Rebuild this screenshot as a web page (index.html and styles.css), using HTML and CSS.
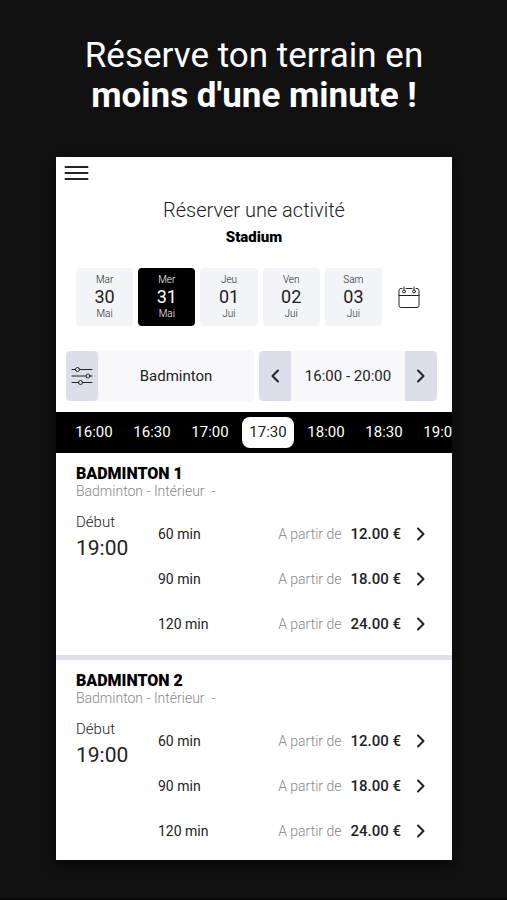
FILE: index.html
```html
<!DOCTYPE html>
<html lang="fr">
<head>
    <meta charset="UTF-8">
    <meta name="viewport" content="width=device-width, initial-scale=1.0">
    <title>Réserver une activité</title>
    <link rel="stylesheet" href="styles.css">
</head>
<body>
    <svg class="sprite" aria-hidden="true">
        <symbol id="next" viewBox="0 0 10 16">
            <path d="M2 2.500 L7.500 8 L2 13.500"/>
        </symbol>
    </svg>
    <h1 class="headline">Réserve ton terrain en <strong>moins d'une minute !</strong></h1>
    <main class="panel">
        <button class="menu" aria-label="Menu">
            <svg viewBox="0 0 24 16"><path d="M1 2H23M1 8H23M1 14H23"/></svg>
        </button>
        <header class="title">
            <h2>Réserver une activité</h2>
            <p>Stadium</p>
        </header>

        <div class="dates">
            <div class="days">
                <button class="day"><span>Mar</span><b>30</b><span>Mai</span></button>
                <button class="day selected"><span>Mer</span><b>31</b><span>Mai</span></button>
                <button class="day"><span>Jeu</span><b>01</b><span>Jui</span></button>
                <button class="day"><span>Ven</span><b>02</b><span>Jui</span></button>
                <button class="day"><span>Sam</span><b>03</b><span>Jui</span></button>
            </div>
            <button class="calendar" aria-label="Calendrier">
                <svg viewBox="0 0 22 22">
                    <path d="M4 2.500H3Q1 2.500 1 4.500V19.500Q1 21.500 3 21.500H19Q21 21.500 21 19.500V4.500Q21 2.500 19 2.500H18M8 2.500H14M1 9.500H21"/>
                    <path d="M6 1V4M16 1V4"/>
                    <circle cx="6" cy="5.500" r="1.500"/>
                    <circle cx="16" cy="5.500" r="1.500"/>
                </svg>
            </button>
        </div>

        <div class="filters">
            <div class="sport">
                <button class="side" aria-label="Filtres">
                    <svg class="sliders" viewBox="0 0 22 20">
                        <path d="M1 3.500H4.500M8.500 3.500H21M1 10H15M19 10H21M1 16.500H7.500M11.500 16.500H21"/>
                        <circle cx="6.500" cy="3.500" r="2"/>
                        <circle cx="17" cy="10" r="2"/>
                        <circle cx="9.500" cy="16.500" r="2"/>
                    </svg>
                </button>
                <button class="value">Badminton</button>
            </div>
            <div class="range">
                <button class="side" aria-label="Plage précédente">
                    <svg class="arrow" viewBox="0 0 10 16"><path d="M8 2.500 L2.500 8 L8 13.500"/></svg>
                </button>
                <span class="value">16:00 - 20:00</span>
                <button class="side" aria-label="Plage suivante">
                    <svg class="arrow"><use href="#next"/></svg>
                </button>
            </div>
        </div>

        <nav class="times">
            <button>16:00</button>
            <button>16:30</button>
            <button>17:00</button>
            <button class="selected">17:30</button>
            <button>18:00</button>
            <button>18:30</button>
            <button>19:00</button>
        </nav>

        <section class="court">
            <h3>BADMINTON 1</h3>
            <p class="kind">Badminton - Intérieur &nbsp;-</p>
            <div class="slots">
                <div class="start"><span>Début</span><b>19:00</b></div>
                <div class="offers">
                    <a class="offer" href="#"><span>60 min</span><small>A partir de</small><b>12.00 €</b><svg class="arrow"><use href="#next"/></svg></a>
                    <a class="offer" href="#"><span>90 min</span><small>A partir de</small><b>18.00 €</b><svg class="arrow"><use href="#next"/></svg></a>
                    <a class="offer" href="#"><span>120 min</span><small>A partir de</small><b>24.00 €</b><svg class="arrow"><use href="#next"/></svg></a>
                </div>
            </div>
        </section>

        <section class="court">
            <h3>BADMINTON 2</h3>
            <p class="kind">Badminton - Intérieur &nbsp;-</p>
            <div class="slots">
                <div class="start"><span>Début</span><b>19:00</b></div>
                <div class="offers">
                    <a class="offer" href="#"><span>60 min</span><small>A partir de</small><b>12.00 €</b><svg class="arrow"><use href="#next"/></svg></a>
                    <a class="offer" href="#"><span>90 min</span><small>A partir de</small><b>18.00 €</b><svg class="arrow"><use href="#next"/></svg></a>
                    <a class="offer" href="#"><span>120 min</span><small>A partir de</small><b>24.00 €</b><svg class="arrow"><use href="#next"/></svg></a>
                </div>
            </div>
        </section>
    </main>
</body>
</html>
```
FILE: styles.css
```css
* {
    box-sizing: border-box;
    margin: 0;
    padding: 0;
}
body {
    min-height: 100vh;
    padding: 36px 55px 38px 56px;
    background: #111;
    border-bottom: 1px solid #000;
    font-family: Roboto, sans-serif;
    font-size: 15px;
    color: #222;
}
button {
    border: none;
    background: none;
    font: inherit;
    color: inherit;
    cursor: pointer;
}
svg {
    display: block;
    fill: none;
    stroke: #222;
    stroke-width: 2;
    stroke-linecap: round;
    stroke-linejoin: round;
}
.sprite {
    display: none;
}
.headline {
    color: #fff;
    font-size: 35px;
    font-weight: 400;
    line-height: 40px;
    text-align: center;
}
.headline strong {
    display: block;
    font-weight: 700;
}
.panel {
    margin-top: 41px;
    background: #fff;
    box-shadow: 0 4px 12px #080808;
    overflow: hidden;
}
.menu {
    display: block;
    margin: 8px 0 0 8px;
}
.menu svg {
    width: 25px;
    height: 16px;
}
.title {
    margin-top: 16px;
    text-align: center;
}
.title h2 {
    font-size: 20px;
    font-weight: 300;
    line-height: 26px;
}
.title p {
    color: #000;
    font-weight: 900;
    line-height: 28px;
}
.dates {
    display: flex;
    align-items: center;
    gap: 16px;
    margin-top: 17px;
    padding: 0 32px 0 20px;
}
.days {
    flex: 1;
    display: grid;
    grid-template-columns: repeat(5, 1fr);
    gap: 5px;
}
.day {
    display: flex;
    flex-direction: column;
    align-items: center;
    padding: 6px 0;
    border-radius: 4px;
    background: #f3f4f8;
}
.day span {
    font-size: 10px;
    font-weight: 300;
    line-height: 12px;
}
.day b {
    font-size: 18px;
    font-weight: 400;
    line-height: 22px;
}
.day.selected {
    background: #000;
    color: #fff;
}
.calendar svg {
    width: 22px;
    height: 22px;
    stroke-width: 1;
}
.filters {
    display: flex;
    gap: 5px;
    margin-top: 25px;
    padding: 0 15px 0 10px;
}
.sport, .range {
    display: flex;
    height: 50px;
    border-radius: 4px;
    background: #f8f8fb;
    overflow: hidden;
}
.sport {
    flex: 188;
}
.range {
    flex: 178;
}
.side {
    display: flex;
    justify-content: center;
    align-items: center;
    width: 32px;
    background: #dcdfea;
}
.sport .side {
    border-radius: 4px;
}
.sliders {
    width: 22px;
    height: 20px;
    stroke-width: 1;
}
.arrow {
    width: 10px;
    height: 16px;
}
.value {
    flex: 1;
    line-height: 50px;
    text-align: center;
}
.times {
    display: flex;
    gap: 6px;
    margin-top: 11px;
    padding: 5px 12px;
    background: #000;
    color: #fff;
    overflow: hidden;
}
.times button {
    flex: 0 0 52px;
    border-radius: 8px;
    line-height: 31px;
}
.times .selected {
    background: #fff;
    color: #222;
}
.court {
    padding: 11px 26px 9px 20px;
}
.court + .court {
    border-top: 5px solid #e0e0ea;
    padding-bottom: 7px;
}
.court h3 {
    color: #000;
    font-size: 16px;
    font-weight: 900;
    line-height: 20px;
}
.kind {
    color: #888;
    font-size: 14px;
    font-weight: 300;
    line-height: 14px;
}
.slots {
    display: flex;
    margin-top: 13px;
}
.start {
    width: 82px;
}
.start span, .start b {
    display: block;
    font-weight: 300;
    line-height: 22px;
}
.start b {
    font-size: 21px;
    font-weight: 400;
    line-height: 30px;
}
.offers {
    flex: 1;
}
.offer {
    display: flex;
    align-items: center;
    height: 45px;
    color: inherit;
    font-size: 14px;
    text-decoration: none;
}
.offer span {
    flex: 1;
}
.offer small {
    margin-right: 9px;
    color: #888;
    font-size: 14px;
    font-weight: 300;
}
.offer b {
    margin-right: 15px;
    font-size: 15px;
    font-weight: 500;
}
```
